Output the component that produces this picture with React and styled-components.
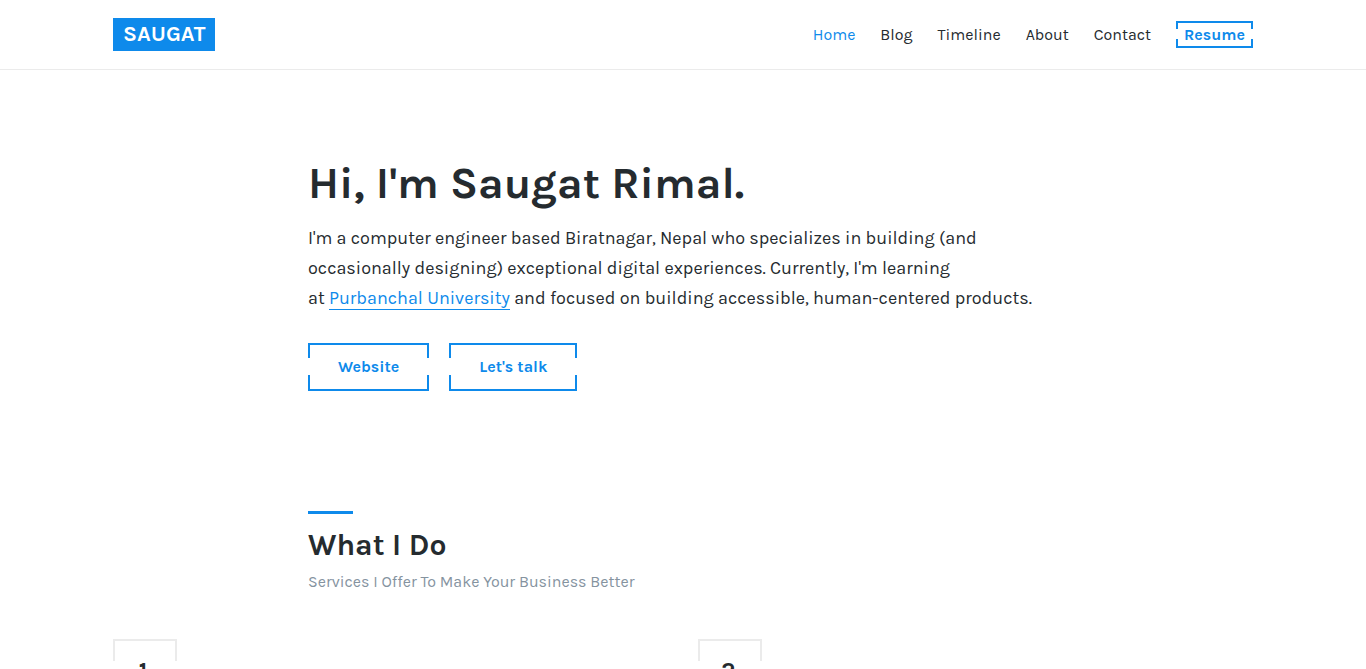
import React from "react";
import styled, { createGlobalStyle, css } from "styled-components";

const blue = "#0e8aeb";
const ink = "#252b2f";
const line = "#ebebeb";

const GlobalStyle = createGlobalStyle`
  * { box-sizing: border-box; }
  body {
    margin: 0;
    background: #fff;
    color: ${ink};
    font-family: Karla, Inter, sans-serif;
    font-size: 16px;
    line-height: 24px;
  }
  h1, h2, p, ul, ol { margin: 0; padding: 0; }
  ul, ol { list-style: none; }
  a { color: inherit; text-decoration: none; }
`;

const Page = styled.div`
  height: 100vh;
  overflow: hidden;
`;

const Container = styled.div`
  width: 100%;
  max-width: 1140px;
  margin: 0 auto;
`;

const Narrow = styled.div`
  width: 100%;
  max-width: 750px;
  margin: 0 auto;
`;

const Header = styled.header`
  border-bottom: 1px solid ${line};
`;

const Bar = styled(Container)`
  display: flex;
  align-items: center;
  justify-content: space-between;
  height: 69px;
`;

const Logo = styled.a`
  padding: 0 10px;
  background: ${blue};
  color: #fff;
  font-size: 22px;
  font-weight: 700;
  line-height: 33px;
  text-align: center;
`;

const Menu = styled.ul`
  display: flex;
  align-items: center;
  gap: 25px;
`;

const MenuLink = styled.a`
  color: ${(p) => (p.$active ? blue : ink)};
`;

/* Frame whose left and right sides are open in the middle. */
const brackets = css`
  position: relative;
  border: 2px solid ${(p) => p.$color || blue};
  &::before {
    content: "";
    position: absolute;
    inset: ${(p) => p.$arm}px -2px ${(p) => p.$arm + 1}px;
    background: #fff;
  }
`;

const Framed = styled.a`
  ${brackets}
  display: block;
  padding: ${(p) => (p.$small ? "0 6px" : "10px 28px")};
  color: ${blue};
  font-weight: 700;
  line-height: ${(p) => (p.$small ? 23 : 24)}px;
  text-align: center;
`;

const Label = styled.span`
  position: relative;
`;

const Hero = styled(Narrow)`
  padding-top: 84px;
`;

const Title = styled.h1`
  font-size: 44px;
  font-weight: 700;
  line-height: 60px;
`;

const Intro = styled.p`
  margin-top: 9px;
  font-size: 18px;
  line-height: 30px;
`;

const InlineLink = styled.a`
  border-bottom: 1px solid ${blue};
  color: ${blue};
`;

const Actions = styled.div`
  display: flex;
  gap: 20px;
  margin-top: 30px;
`;

const SectionHead = styled(Narrow)`
  margin-top: 120px;
  &::before {
    content: "";
    display: block;
    width: 45px;
    height: 3px;
    background: ${blue};
  }
`;

const SectionTitle = styled.h2`
  margin-top: 11px;
  font-size: 30px;
  font-weight: 700;
  line-height: 40px;
`;

const Subtitle = styled.p`
  margin-top: 5px;
  color: #85939f;
`;

const Services = styled.ol`
  display: grid;
  grid-template-columns: 1fr 1fr;
  gap: 30px;
  margin-top: 45px;
`;

const Num = styled.span`
  ${brackets}
  display: block;
  width: 64px;
  height: 64px;
  padding-right: 4px;
  font-size: 24px;
  font-weight: 700;
  line-height: 60px;
  text-align: center;
`;

const links = ["Home", "Blog", "Timeline", "About", "Contact"];

export default function App() {
  return (
    <Page>
      <GlobalStyle />
      <Header>
        <Bar>
          <Logo href="#home">SAUGAT</Logo>
          <nav>
            <Menu>
              {links.map((name) => (
                <li key={name}>
                  <MenuLink href={`#${name.toLowerCase()}`} $active={name === "Home"}>
                    {name}
                  </MenuLink>
                </li>
              ))}
              <li>
                <Framed href="#resume" $small $arm={6}>
                  <Label>Resume</Label>
                </Framed>
              </li>
            </Menu>
          </nav>
        </Bar>
      </Header>
      <main>
        <Hero>
          <Title>Hi, I'm Saugat Rimal.</Title>
          <Intro>
            I'm a computer engineer based Biratnagar, Nepal who specializes in building (and
            occasionally designing) exceptional digital experiences. Currently, I'm learning
            at&nbsp;<InlineLink href="#university">Purbanchal University</InlineLink> and focused
            on building accessible, human-centered products.
          </Intro>
          <Actions>
            <Framed href="#website" $arm={13}>
              <Label>Website</Label>
            </Framed>
            <Framed href="#contact" $arm={13}>
              <Label>Let's talk</Label>
            </Framed>
          </Actions>
        </Hero>
        <SectionHead>
          <SectionTitle>What I Do</SectionTitle>
          <Subtitle>Services I Offer To Make Your Business Better</Subtitle>
        </SectionHead>
        <Container>
          <Services>
            {[1, 2].map((n) => (
              <li key={n}>
                <Num $color={line} $arm={20}>
                  <Label>{n}</Label>
                </Num>
              </li>
            ))}
          </Services>
        </Container>
      </main>
    </Page>
  );
}
